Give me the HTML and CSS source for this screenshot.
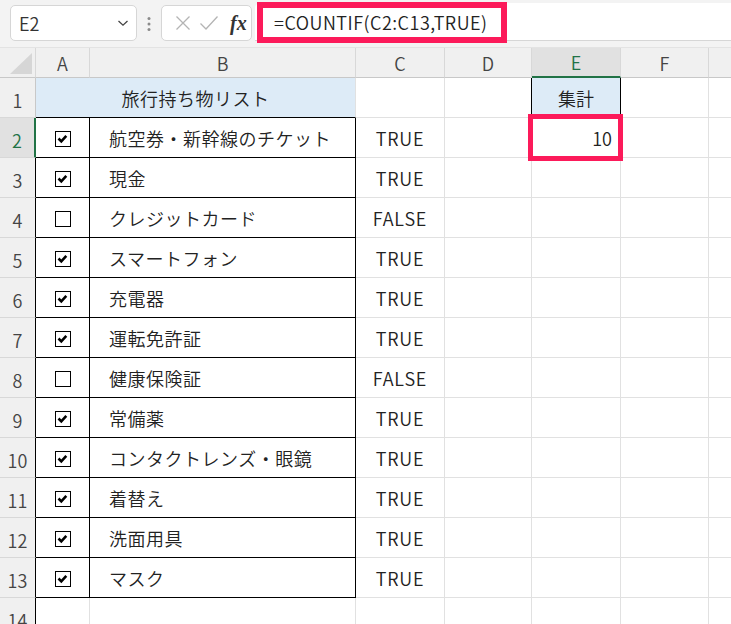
FILE: index.html
```html
<!DOCTYPE html>
<html lang="ja">
<head>
  <meta charset="UTF-8" />
  <title>旅行持ち物リスト</title>
  <link rel="stylesheet" href="styles.css">
</head>
<body>

  <div class="topbar">
    <div class="namebox">
      <span>E2</span>
      <svg class="chevron" width="12" height="8" viewBox="0 0 12 8"><path d="M1.5 2 L6 6.2 L10.5 2" fill="none" stroke="#444" stroke-width="1.3"/></svg>
    </div>
    <svg class="grip" width="4" height="16" viewBox="0 0 4 16"><circle cx="2" cy="2.5" r="1.5" fill="#8a8a8a"/><circle cx="2" cy="8" r="1.5" fill="#8a8a8a"/><circle cx="2" cy="13.5" r="1.5" fill="#8a8a8a"/></svg>
    <div class="fxgroup">
      <svg width="16" height="16" viewBox="0 0 16 16"><path d="M1.5 1.5 L14.5 14.5 M14.5 1.5 L1.5 14.5" stroke="#b4b4b4" stroke-width="1.3" fill="none"/></svg>
      <svg width="20" height="16" viewBox="0 0 20 16"><path d="M1.5 8.5 L7 14 L18.5 1.5" stroke="#b4b4b4" stroke-width="1.3" fill="none"/></svg>
      <span class="fx">fx</span>
    </div>
    <div class="formula">
      <span class="formula-text">=COUNTIF(C2:C13,TRUE)</span>
      <div class="mark mark-formula"></div>
    </div>
  </div>

  <div class="sheet">
    <div class="corner"><svg width="22" height="21" viewBox="0 0 22 21"><path d="M22 0 L22 21 L0 21 Z" fill="#d6d6d6"/></svg></div>
    <div class="colhead">A</div>
    <div class="colhead">B</div>
    <div class="colhead">C</div>
    <div class="colhead">D</div>
    <div class="colhead active">E</div>
    <div class="colhead">F</div>
    <div class="colhead last"></div>

    <div class="rowhead">1</div>
    <div class="cell title">旅行持ち物リスト</div>
    <div class="cell"></div>
    <div class="cell edge"></div>
    <div class="cell label">集計</div>
    <div class="cell"></div>
    <div class="cell last"></div>

    <div class="rowhead active">2</div>
    <div class="cell box"><span class="chk on"></span></div>
    <div class="cell item">航空券・新幹線のチケット</div>
    <div class="cell bool">TRUE</div>
    <div class="cell edge"></div>
    <div class="cell total">10<div class="mark mark-cell"></div></div>
    <div class="cell"></div>
    <div class="cell last"></div>

    <div class="rowhead">3</div>
    <div class="cell box"><span class="chk on"></span></div>
    <div class="cell item">現金</div>
    <div class="cell bool">TRUE</div>
    <div class="cell"></div><div class="cell"></div><div class="cell"></div><div class="cell last"></div>

    <div class="rowhead">4</div>
    <div class="cell box"><span class="chk"></span></div>
    <div class="cell item">クレジットカード</div>
    <div class="cell bool">FALSE</div>
    <div class="cell"></div><div class="cell"></div><div class="cell"></div><div class="cell last"></div>

    <div class="rowhead">5</div>
    <div class="cell box"><span class="chk on"></span></div>
    <div class="cell item">スマートフォン</div>
    <div class="cell bool">TRUE</div>
    <div class="cell"></div><div class="cell"></div><div class="cell"></div><div class="cell last"></div>

    <div class="rowhead">6</div>
    <div class="cell box"><span class="chk on"></span></div>
    <div class="cell item">充電器</div>
    <div class="cell bool">TRUE</div>
    <div class="cell"></div><div class="cell"></div><div class="cell"></div><div class="cell last"></div>

    <div class="rowhead">7</div>
    <div class="cell box"><span class="chk on"></span></div>
    <div class="cell item">運転免許証</div>
    <div class="cell bool">TRUE</div>
    <div class="cell"></div><div class="cell"></div><div class="cell"></div><div class="cell last"></div>

    <div class="rowhead">8</div>
    <div class="cell box"><span class="chk"></span></div>
    <div class="cell item">健康保険証</div>
    <div class="cell bool">FALSE</div>
    <div class="cell"></div><div class="cell"></div><div class="cell"></div><div class="cell last"></div>

    <div class="rowhead">9</div>
    <div class="cell box"><span class="chk on"></span></div>
    <div class="cell item">常備薬</div>
    <div class="cell bool">TRUE</div>
    <div class="cell"></div><div class="cell"></div><div class="cell"></div><div class="cell last"></div>

    <div class="rowhead">10</div>
    <div class="cell box"><span class="chk on"></span></div>
    <div class="cell item">コンタクトレンズ・眼鏡</div>
    <div class="cell bool">TRUE</div>
    <div class="cell"></div><div class="cell"></div><div class="cell"></div><div class="cell last"></div>

    <div class="rowhead">11</div>
    <div class="cell box"><span class="chk on"></span></div>
    <div class="cell item">着替え</div>
    <div class="cell bool">TRUE</div>
    <div class="cell"></div><div class="cell"></div><div class="cell"></div><div class="cell last"></div>

    <div class="rowhead">12</div>
    <div class="cell box"><span class="chk on"></span></div>
    <div class="cell item">洗面用具</div>
    <div class="cell bool">TRUE</div>
    <div class="cell"></div><div class="cell"></div><div class="cell"></div><div class="cell last"></div>

    <div class="rowhead">13</div>
    <div class="cell box"><span class="chk on"></span></div>
    <div class="cell item">マスク</div>
    <div class="cell bool">TRUE</div>
    <div class="cell"></div><div class="cell"></div><div class="cell"></div><div class="cell last"></div>

    <div class="rowhead">14</div>
    <div class="cell"></div><div class="cell"></div><div class="cell"></div><div class="cell"></div>
    <div class="cell"></div><div class="cell"></div><div class="cell last"></div>
  </div>

</body>
</html>
```

FILE: styles.css
```css
* {
  box-sizing: border-box;
  margin: 0;
  padding: 0;
}
body {
  font-family: "Noto Sans CJK JP", "Noto Sans", sans-serif;
  font-weight: 350;
  background-color: #fff;
  color: #222;
  width: 731px;
  height: 624px;
  overflow: hidden;
}

/* formula bar */
.topbar {
  height: 48px;
  background-color: #f3f3f3;
  border-bottom: 1px solid #e3e3e3;
  display: flex;
  align-items: flex-start;
  padding-left: 10px;
}
.namebox {
  margin-top: 5px;
  width: 127px;
  height: 36px;
  background: #fff;
  border: 1px solid #d6d6d6;
  border-radius: 5px;
  display: flex;
  align-items: center;
  justify-content: space-between;
  padding: 0 7px 0 8px;
  font-size: 18px;
  color: #333;
}
.grip {
  margin: 16px 10px 0 10px;
}
.fxgroup {
  margin-top: 5px;
  width: 91px;
  height: 36px;
  background: #fff;
  border: 1px solid #d6d6d6;
  border-radius: 5px;
  display: flex;
  align-items: center;
  gap: 8px;
  padding-left: 13px;
}
.fx {
  font-family: "Liberation Serif", serif;
  font-style: italic;
  font-weight: bold;
  font-size: 20px;
  color: #333;
  margin-left: 3px;
}
.formula {
  position: relative;
  flex: 1;
  margin: 3px 0 0 3px;
  height: 38px;
  background: #fff;
  border-bottom: 1px solid #d6d6d6;
  border-top-left-radius: 5px;
  display: flex;
  align-items: center;
  padding-left: 19px;
  font-size: 18px;
  letter-spacing: 0.5px;
  color: #222;
}
.mark {
  position: absolute;
  border: 6px solid #fc1a5a;
  z-index: 5;
}
.mark-formula {
  left: 2px;
  top: -1px;
  width: 250px;
  height: 41px;
}
.mark-cell {
  left: -4px;
  top: -4px;
  width: 95px;
  height: 47px;
  border-width: 5px;
}

/* sheet */
.sheet {
  display: grid;
  grid-template-columns: 36px 54px 266px 89px 87px 89px 88px 22px;
  grid-template-rows: 30px;
  grid-auto-rows: 40px;
  font-size: 18px;
}
.corner,
.colhead,
.rowhead {
  background-color: #f0f0f0;
  color: #444;
  border-right: 1px solid #d8d8d8;
  border-bottom: 1px solid #c8c8c8;
}
.corner {
  display: flex;
  align-items: flex-end;
  justify-content: flex-end;
  padding: 0 3px 3px 0;
}
.colhead {
  display: flex;
  align-items: center;
  justify-content: center;
}
.colhead.active {
  background-color: #e1e1e1;
  color: #217346;
  border-bottom: 2px solid #217346;
}
.colhead.last,
.cell.last {
  border-right: none;
}
.rowhead {
  display: flex;
  align-items: flex-end;
  justify-content: center;
  padding-bottom: 4px;
  border-bottom-color: #d8d8d8;
  border-right: 1px solid #000;
}
.sheet > .rowhead:nth-child(9),
.sheet > .rowhead:last-of-type {
  border-right-color: #c8c8c8;
}
.rowhead.active {
  background-color: #e1e1e1;
  color: #217346;
  border-right: 2px solid #217346;
}
.cell {
  border-right: 1px solid #e1e1e1;
  border-bottom: 1px solid #e1e1e1;
  display: flex;
  align-items: center;
  white-space: nowrap;
}
.cell.title {
  grid-column: span 2;
  background-color: #ddebf7;
  justify-content: center;
  border-bottom-color: #000;
  letter-spacing: 0.5px;
}
.cell.edge {
  border-right-color: #000;
}
.cell.label {
  background-color: #ddebf7;
  justify-content: center;
  border-right-color: #000;
  border-bottom-color: #000;
}
.cell.box,
.cell.item {
  border-right-color: #000;
  border-bottom-color: #000;
}
.cell.box {
  justify-content: center;
  padding-top: 2px;
}
.cell.item {
  padding-left: 19px;
  letter-spacing: 0.5px;
}
.cell.bool {
  justify-content: center;
  letter-spacing: 0.8px;
}
.cell.total {
  position: relative;
  justify-content: flex-end;
  padding-right: 8px;
}
.chk {
  width: 16px;
  height: 16px;
  border: 1.5px solid #000;
  background: #fff;
  display: block;
}
.chk.on {
  background-image: url("data:image/svg+xml;utf8,<svg xmlns='http://www.w3.org/2000/svg' width='13' height='13' viewBox='0 0 13 13'><path d='M2.5 6.5 L5.3 9.3 L10.3 3.8' fill='none' stroke='black' stroke-width='2.6'/></svg>");
  background-repeat: no-repeat;
  background-position: center;
}
```
